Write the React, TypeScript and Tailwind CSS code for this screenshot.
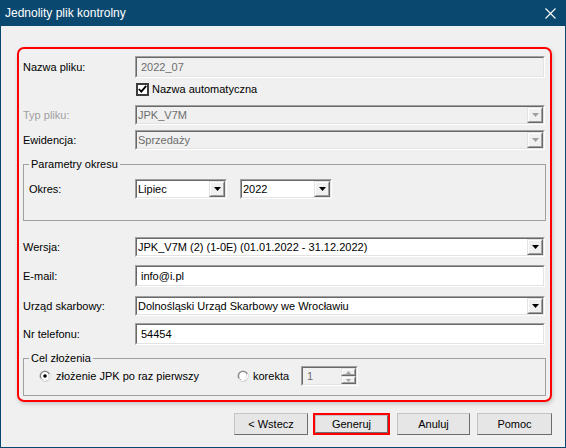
import * as React from "react";

function Sunken(props: {
  className?: string;
  disabled?: boolean;
  children?: React.ReactNode;
}) {
  const { className = "", disabled = false, children } = props;
  return (
    <div
      className={`border border-t-[#a0a0a0] border-l-[#a0a0a0] border-r-white border-b-white ${className}`}
    >
      <div
        className={`flex h-full items-center border border-t-[#696969] border-l-[#696969] border-r-[#e3e3e3] border-b-[#e3e3e3] ${
          disabled ? "bg-[#f0f0f0] text-[#6d6d6d]" : "bg-white text-black"
        }`}
      >
        {children}
      </div>
    </div>
  );
}

function Raised(props: { className?: string; children?: React.ReactNode }) {
  return (
    <div
      className={`border border-t-[#e3e3e3] border-l-[#e3e3e3] border-r-[#696969] border-b-[#696969] bg-[#f0f0f0] ${
        props.className ?? ""
      }`}
    >
      <div className="flex h-full items-center justify-center border border-t-white border-l-white border-r-[#a0a0a0] border-b-[#a0a0a0]">
        {props.children}
      </div>
    </div>
  );
}

function Triangle(props: { disabled?: boolean; up?: boolean; small?: boolean }) {
  const color = props.disabled ? "#a0a0a0" : "#000000";
  if (props.small) {
    return (
      <svg width="5" height="3" viewBox="0 0 5 3">
        <polygon points={props.up ? "2.5,0 5,3 0,3" : "0,0 5,0 2.5,3"} fill={color} />
      </svg>
    );
  }
  return (
    <svg width="7" height="4" viewBox="0 0 7 4">
      <polygon points="0,0 7,0 3.5,4" fill={color} />
    </svg>
  );
}

function Combo(props: { value: string; disabled?: boolean; className?: string }) {
  return (
    <Sunken disabled={props.disabled} className={`h-[20px] ${props.className ?? ""}`}>
      <span className="flex-1 truncate pl-[1px] leading-[16px]">{props.value}</span>
      <Raised className="h-full w-[16px]">
        <Triangle disabled={props.disabled} />
      </Raised>
    </Sunken>
  );
}

function TextField(props: { value: string; disabled?: boolean }) {
  return (
    <Sunken disabled={props.disabled} className="h-[22px] w-[410px]">
      <span className="pl-[4px] leading-[18px]">{props.value}</span>
    </Sunken>
  );
}

function Row(props: {
  label: string;
  muted?: boolean;
  className?: string;
  children: React.ReactNode;
}) {
  return (
    <div className={`flex items-center ${props.className ?? ""}`}>
      <span className={`w-[112px] ${props.muted ? "text-[#a0a0a0]" : "text-black"}`}>
        {props.label}
      </span>
      {props.children}
    </div>
  );
}

function Radio(props: { checked?: boolean }) {
  return (
    <svg width="12" height="12" viewBox="0 0 12 12">
      <circle cx="6" cy="6" r="5.5" fill="#a0a0a0" />
      <circle cx="6" cy="6" r="4.6" fill="#696969" />
      <path d="M1.6 8.5 A5 5 0 0 0 10.4 4" stroke="#ffffff" strokeWidth="1.2" fill="none" />
      <circle cx="6" cy="6" r="3.9" fill="#ffffff" />
      {props.checked ? <circle cx="6" cy="6" r="1.8" fill="#000000" /> : null}
    </svg>
  );
}

function Button(props: { label: string; className?: string }) {
  return (
    <div
      className={`flex h-[22px] items-center justify-center border border-t-[#c4c4c4] border-l-[#c4c4c4] border-r-[#6d6d6d] border-b-[#6d6d6d] bg-[#e6e6e6] text-black ${
        props.className ?? ""
      }`}
    >
      {props.label}
    </div>
  );
}

export default function App() {
  return (
    <div className="flex h-[448px] w-[566px] flex-col bg-[#f0f0f0] font-['Liberation_Sans',Arial,sans-serif] text-[11px] text-black">
      {/* title bar */}
      <div className="flex h-[26px] shrink-0 items-center justify-between bg-[#0b4870] pl-[5px] pr-[10px] text-white">
        <span className="text-[12px]">Jednolity plik kontrolny</span>
        <svg width="11" height="11" viewBox="0 0 11 11">
          <path d="M0.5 0.5 L10.5 10.5 M10.5 0.5 L0.5 10.5" stroke="#ffffff" strokeWidth="1.1" />
        </svg>
      </div>

      <div className="flex flex-1 flex-col border-x border-b border-[#0b4870]">
        <div className="ml-[16px] mt-[21px] w-[535px] rounded-[7px] border-2 border-[#ff0000] px-[4px] pb-[4px] pt-[7px] shadow-[1px_2px_4px_rgba(0,0,0,0.18)]">
          <Row label="Nazwa pliku:" className="h-[22px]">
            <TextField value="2022_07" disabled />
          </Row>

          <div className="flex h-[22px] items-center pl-[113px]">
            <div className="flex h-[13px] w-[13px] items-center justify-center border-2 border-[#3c3c3c] bg-white">
              <svg width="9" height="8" viewBox="0 0 9 8">
                <path d="M0.8 4 L3.3 6.6 L8.2 0.8" stroke="#000000" strokeWidth="1.8" fill="none" />
              </svg>
            </div>
            <span className="ml-[3px]">Nazwa automatyczna</span>
          </div>

          <Row label="Typ pliku:" muted className="mt-[5px] h-[20px]">
            <Combo value="JPK_V7M" disabled className="w-[410px]" />
          </Row>

          <Row label="Ewidencja:" className="mt-[5px] h-[20px]">
            <Combo value="Sprzedaży" disabled className="w-[410px]" />
          </Row>

          <fieldset className="mt-[7px] border border-[#a0a0a0] px-0 pb-[21px]">
            <legend className="ml-[5px] px-[2px] leading-[14px]">Parametry okresu</legend>
            <div className="mt-[8px] flex h-[20px] items-center pl-[5px]">
              <span className="w-[106px]">Okres:</span>
              <Combo value="Lipiec" className="w-[92px]" />
              <Combo value="2022" className="ml-[13px] w-[92px]" />
            </div>
          </fieldset>

          <Row label="Wersja:" className="mt-[16px] h-[20px]">
            <Combo value="JPK_V7M (2) (1-0E) (01.01.2022 - 31.12.2022)" className="w-[410px]" />
          </Row>

          <Row label="E-mail:" className="mt-[8px] h-[22px]">
            <TextField value="info@i.pl" />
          </Row>

          <Row label="Urząd skarbowy:" className="mt-[9px] h-[20px]">
            <Combo value="Dolnośląski Urząd Skarbowy we Wrocławiu" className="w-[410px]" />
          </Row>

          <Row label="Nr telefonu:" className="mt-[7px] h-[22px]">
            <TextField value="54454" />
          </Row>

          <fieldset className="mt-[6px] border border-[#a0a0a0] px-0 pb-[9px]">
            <legend className="ml-[5px] px-[2px] leading-[14px]">Cel złożenia</legend>
            <div className="mt-[1px] flex h-[20px] items-center pl-[15px]">
              <div className="flex w-[198px] items-center gap-[5px]">
                <Radio checked />
                <span>złożenie JPK po raz pierwszy</span>
              </div>
              <div className="flex items-center gap-[4px]">
                <Radio />
                <span>korekta</span>
              </div>
              <Sunken disabled className="ml-[12px] h-[20px] w-[57px]">
                <span className="flex-1 pl-[4px] leading-[16px]">1</span>
                <div className="flex h-full w-[15px] flex-col">
                  <Raised className="h-1/2 w-full">
                    <Triangle disabled up small />
                  </Raised>
                  <Raised className="h-1/2 w-full">
                    <Triangle disabled small />
                  </Raised>
                </div>
              </Sunken>
            </div>
          </fieldset>
        </div>

        <div className="mt-[11px] flex items-center justify-end gap-[5px] pr-[13px]">
          <Button label="< Wstecz" className="w-[74px]" />
          <div className="flex h-[22px] w-[77px] items-center border-2 border-[#ff0000]">
            <Button label="Generuj" className="h-full w-full" />
          </div>
          <Button label="Anuluj" className="ml-[2px] w-[73px]" />
          <Button label="Pomoc" className="ml-[2px] w-[75px]" />
        </div>
      </div>
    </div>
  );
}
